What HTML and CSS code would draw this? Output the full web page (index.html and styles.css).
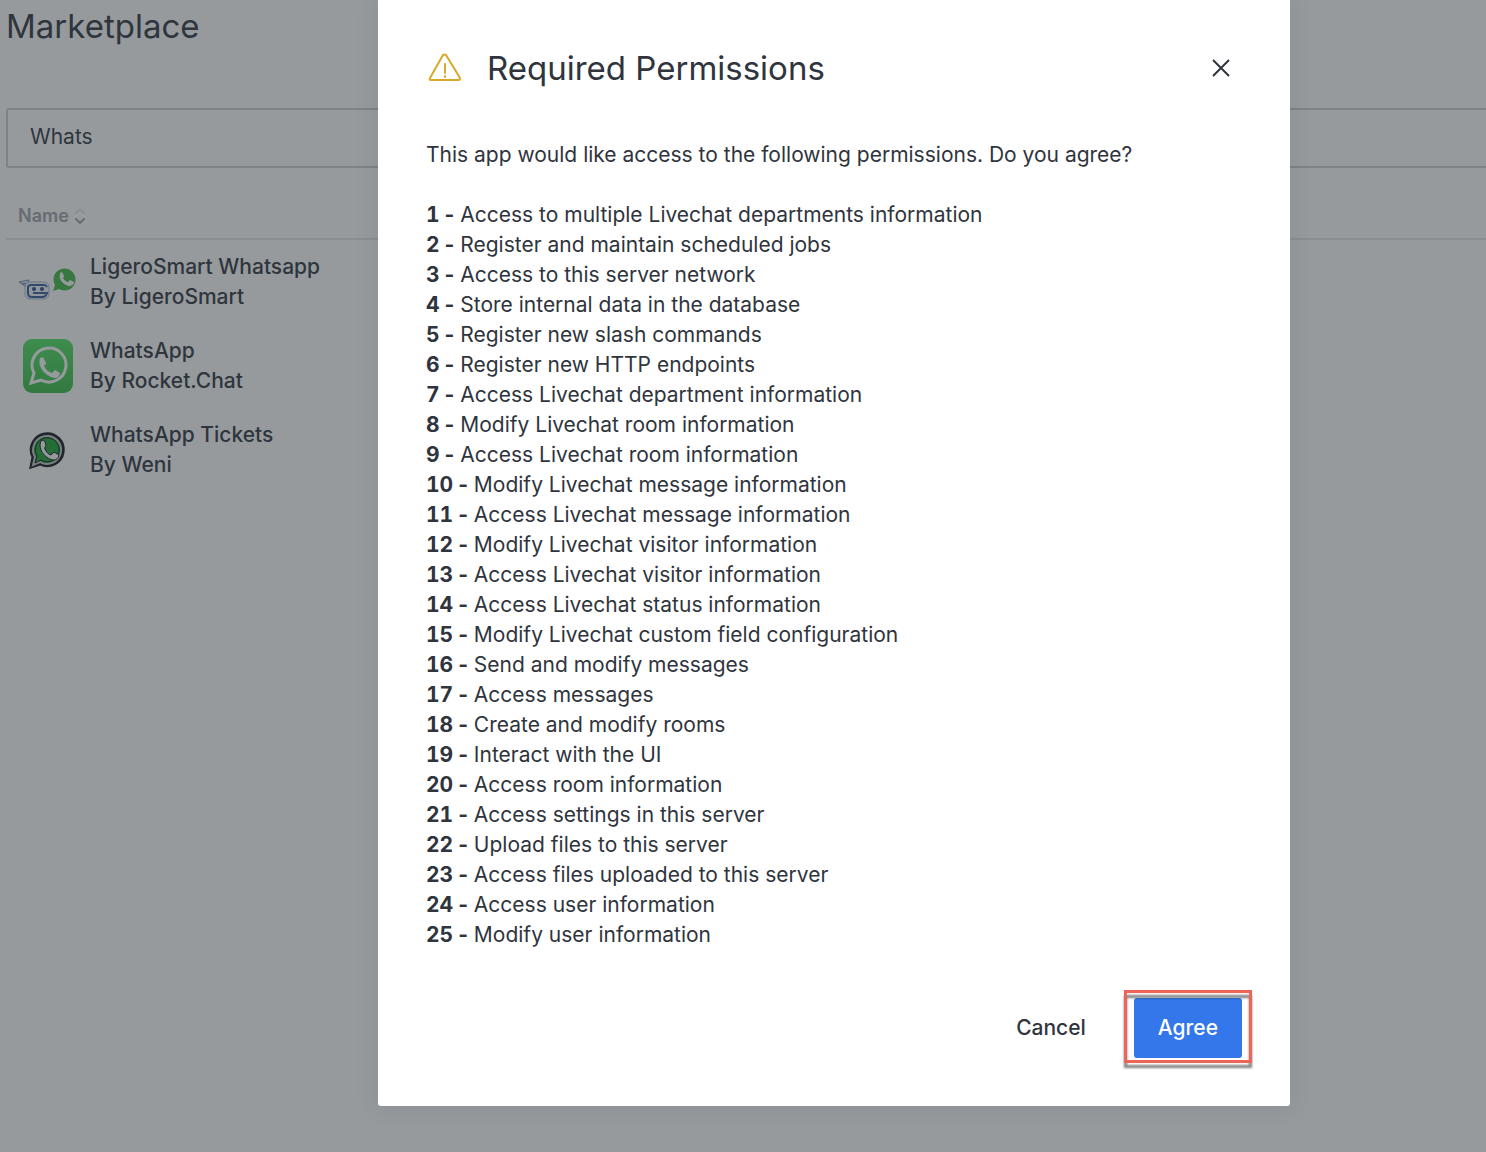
FILE: index.html
```html
<!DOCTYPE html>
<html lang="en">
<head>
<meta charset="utf-8">
<meta name="viewport" content="width=device-width, initial-scale=1">
<title>Marketplace</title>
<link rel="stylesheet" href="styles.css">
</head>
<body>
<main class="page">
  <h1 class="page-title">Marketplace</h1>
  <input class="search" type="text" aria-label="Search apps" value="Whats">
  <table class="apps">
    <thead>
      <tr><th scope="col"><span class="sort">Name
        <svg width="14" height="18" viewBox="0 0 14 18" fill="none" stroke-width="2" stroke-linecap="round" stroke-linejoin="round"><path d="M3 6l4-4 4 4" stroke="#e4e7ea"/><path d="M3 12l4 4 4-4" stroke="#9ea2a8"/></svg>
      </span></th></tr>
    </thead>
    <tbody>
      <tr><td><div class="app">
        <svg class="logo" viewBox="0 0 60 60">
          <path d="M1 30l10-2-1 4 5 1-1 4-4-1z" fill="#e3eaf3" stroke="#6c87b0" stroke-width="1"/>
          <path d="M4 32l9-1M7 36l7-2" stroke="#4a6ea9" stroke-width="1"/>
          <rect x="7" y="30" width="24" height="17" rx="5" fill="#f2f5f9" stroke="#a6b7cf" stroke-width="1"/>
          <path d="M29 35q-1-2-3-2H13q-3 0-3 3v5q0 4 4 4h10q4 0 5-4H15" fill="none" stroke="#315f9f" stroke-width="2"/>
          <circle cx="16" cy="37" r="2" fill="#264b83"/><circle cx="24" cy="37" r="2" fill="#264b83"/>
          <path d="M35 39l2-6a11 11 0 1 1 4 4z" fill="#3eba43"/>
          <path d="M42 21c1-1 3-1 3 1l1 2c0 1-1 2-1 2 1 2 3 4 5 4l2-2 4 2c0 3-3 4-5 4-5-1-11-7-9-11z" fill="#fff"/>
        </svg>
        <div class="app-text"><span>LigeroSmart Whatsapp</span><span>By LigeroSmart</span></div>
      </div></td></tr>
      <tr><td><div class="app">
        <svg class="logo" viewBox="0 0 60 60">
          <defs><linearGradient id="green" x2="0" y2="1"><stop stop-color="#50e363"/><stop offset="1" stop-color="#38bd45"/></linearGradient></defs>
          <rect x="5" y="3" width="50" height="54" rx="9" fill="url(#green)"/>
          <path d="M13 47l3-10a17 17 0 1 1 7 7z" fill="none" stroke="#fff" stroke-width="3"/>
          <path d="M22 22c2-1 4-1 4 1l2 4c0 2-2 2-2 3 2 4 5 6 8 7l3-3 5 3c0 3-3 5-5 5-8-1-18-10-15-20z" fill="#fff"/>
        </svg>
        <div class="app-text"><span>WhatsApp</span><span>By Rocket.Chat</span></div>
      </div></td></tr>
      <tr><td><div class="app">
        <svg class="logo" viewBox="0 0 60 60">
          <path d="M13 47l2-10a16 16 0 1 1 7 7z" fill="#1ba533" stroke="#15151d" stroke-width="3"/>
          <path d="M15 45l2-8a14 14 0 1 1 5 5z" fill="#1ba533" stroke="#c8c8cc" stroke-width="2"/>
          <path d="M17 43l2-7a12 12 0 1 1 4 4z" fill="#1ba533" stroke="#15151d" stroke-width="1"/>
          <path d="M23 21c2-1 3-1 4 1l1 3c0 2-2 2-1 4 1 3 3 5 6 6l3-3 5 3c0 3-3 5-5 5-7 0-17-10-13-19z" fill="#fff" stroke="#15151d" stroke-width="1"/>
        </svg>
        <div class="app-text"><span>WhatsApp Tickets</span><span>By Weni</span></div>
      </div></td></tr>
    </tbody>
  </table>
</main>

<div class="backdrop">
  <section class="modal" role="dialog" aria-modal="true" aria-labelledby="modal-title">
    <header class="modal-header">
      <svg class="warning" viewBox="0 0 36 36" fill="none" stroke="#d9a92c" stroke-width="2" stroke-linecap="round" stroke-linejoin="round"><path d="M17 5q1-1 3 0l14 23q0 2-1 2H5q-2 0-1-2z"/><path d="M19 14v9"/><path d="M19 26v1"/></svg>
      <h2 id="modal-title">Required Permissions</h2>
      <button class="close" type="button" aria-label="Close"><svg width="18" height="18" viewBox="0 0 18 18" stroke="#2f343d" stroke-width="2"><path d="M1 1l16 16M17 1L1 17"/></svg></button>
    </header>
    <div class="modal-body">
      <p>This app would like access to the following permissions. Do you agree?</p>
      <ul class="permissions">
        <li><b><span>1</span> -</b> Access to multiple Livechat departments information</li>
        <li><b><span>2</span> -</b> Register and maintain scheduled jobs</li>
        <li><b><span>3</span> -</b> Access to this server network</li>
        <li><b><span>4</span> -</b> Store internal data in the database</li>
        <li><b><span>5</span> -</b> Register new slash commands</li>
        <li><b><span>6</span> -</b> Register new HTTP endpoints</li>
        <li><b><span>7</span> -</b> Access Livechat department information</li>
        <li><b><span>8</span> -</b> Modify Livechat room information</li>
        <li><b><span>9</span> -</b> Access Livechat room information</li>
        <li><b><span>10</span> -</b> Modify Livechat message information</li>
        <li><b><span>11</span> -</b> Access Livechat message information</li>
        <li><b><span>12</span> -</b> Modify Livechat visitor information</li>
        <li><b><span>13</span> -</b> Access Livechat visitor information</li>
        <li><b><span>14</span> -</b> Access Livechat status information</li>
        <li><b><span>15</span> -</b> Modify Livechat custom field configuration</li>
        <li><b><span>16</span> -</b> Send and modify messages</li>
        <li><b><span>17</span> -</b> Access messages</li>
        <li><b><span>18</span> -</b> Create and modify rooms</li>
        <li><b><span>19</span> -</b> Interact with the UI</li>
        <li><b><span>20</span> -</b> Access room information</li>
        <li><b><span>21</span> -</b> Access settings in this server</li>
        <li><b><span>22</span> -</b> Upload files to this server</li>
        <li><b><span>23</span> -</b> Access files uploaded to this server</li>
        <li><b><span>24</span> -</b> Access user information</li>
        <li><b><span>25</span> -</b> Modify user information</li>
      </ul>
    </div>
    <footer class="modal-footer">
      <button class="button" type="button">Cancel</button>
      <span class="highlight"><button class="button primary" type="button">Agree</button></span>
    </footer>
  </section>
</div>
</body>
</html>
```
FILE: styles.css
```css
*,
*::before,
*::after {
  box-sizing: border-box;
}

body {
  margin: 0;
  background: #fff;
  color: #2f343d;
  font-family: Inter, "Liberation Sans", sans-serif;
  font-size: 21px;
  line-height: 30px;
  overflow-x: hidden;
}

h1,
h2,
p,
ul {
  margin: 0;
}

button,
input {
  color: inherit;
  font: inherit;
}

.page {
  padding: 2px 0 24px 6px;
}

.page-title,
.modal-header h2 {
  font-size: 33px;
  font-weight: 400;
  line-height: 48px;
}

.search {
  display: block;
  width: 100%;
  height: 60px;
  margin-top: 58px;
  padding: 0 22px 3px;
  border: 2px solid #cbced1;
  border-right: 0;
  border-radius: 3px 0 0 3px;
  background: #fff;
}

.apps {
  width: 100%;
  margin-top: 24px;
  border-collapse: separate;
  border-spacing: 0;
}

.apps th {
  height: 48px;
  padding: 2px 12px 0;
  border-bottom: 2px solid #e4e7ea;
  color: #9ea2a8;
  font-size: 18px;
  font-weight: 600;
  text-align: left;
}

.sort {
  display: flex;
  align-items: center;
  gap: 4px;
}

.apps td {
  padding: 12px;
}

.app {
  display: flex;
  gap: 12px;
}

.logo {
  width: 60px;
  height: 60px;
}

.app-text {
  display: flex;
  flex-direction: column;
  font-weight: 500;
}

.backdrop {
  position: absolute;
  inset: 0;
  display: flex;
  align-items: flex-start;
  justify-content: center;
  min-height: 100vh;
  padding: 0 0 46px 182px;
  background: rgba(45, 54, 59, 0.5);
}

.modal {
  width: 100%;
  max-width: 912px;
  padding: 44px 48px 48px;
  border-radius: 0 0 3px 3px;
  background: #fff;
  box-shadow: 0 0 24px rgba(47, 52, 61, 0.1);
}

.modal-header {
  display: flex;
  align-items: center;
}

.modal-header h2 {
  flex: 1;
  margin-left: 25px;
}

.warning {
  width: 36px;
  height: 36px;
}

.close {
  display: grid;
  place-items: center;
  width: 42px;
  height: 42px;
  padding: 0;
  border: 0;
  background: none;
}

.modal-body {
  margin-top: 48px;
}

.permissions {
  margin-top: 30px;
  padding: 0;
  list-style: none;
}

.permissions span {
  font-variant-numeric: tabular-nums;
}

.modal-footer {
  display: flex;
  justify-content: flex-end;
  gap: 24px;
  margin-top: 48px;
}

.button {
  height: 60px;
  padding: 0 24px;
  border: 0;
  border-radius: 3px;
  background: none;
  font-weight: 500;
}

.primary {
  background: #3477eb;
  color: #fff;
}

.highlight {
  position: relative;
}

.highlight::after {
  content: "";
  position: absolute;
  inset: -8px -10px -5px;
  border: 3px solid #ec6556;
  filter: drop-shadow(0 5px 1px rgba(0, 0, 0, 0.5));
  pointer-events: none;
}
```
